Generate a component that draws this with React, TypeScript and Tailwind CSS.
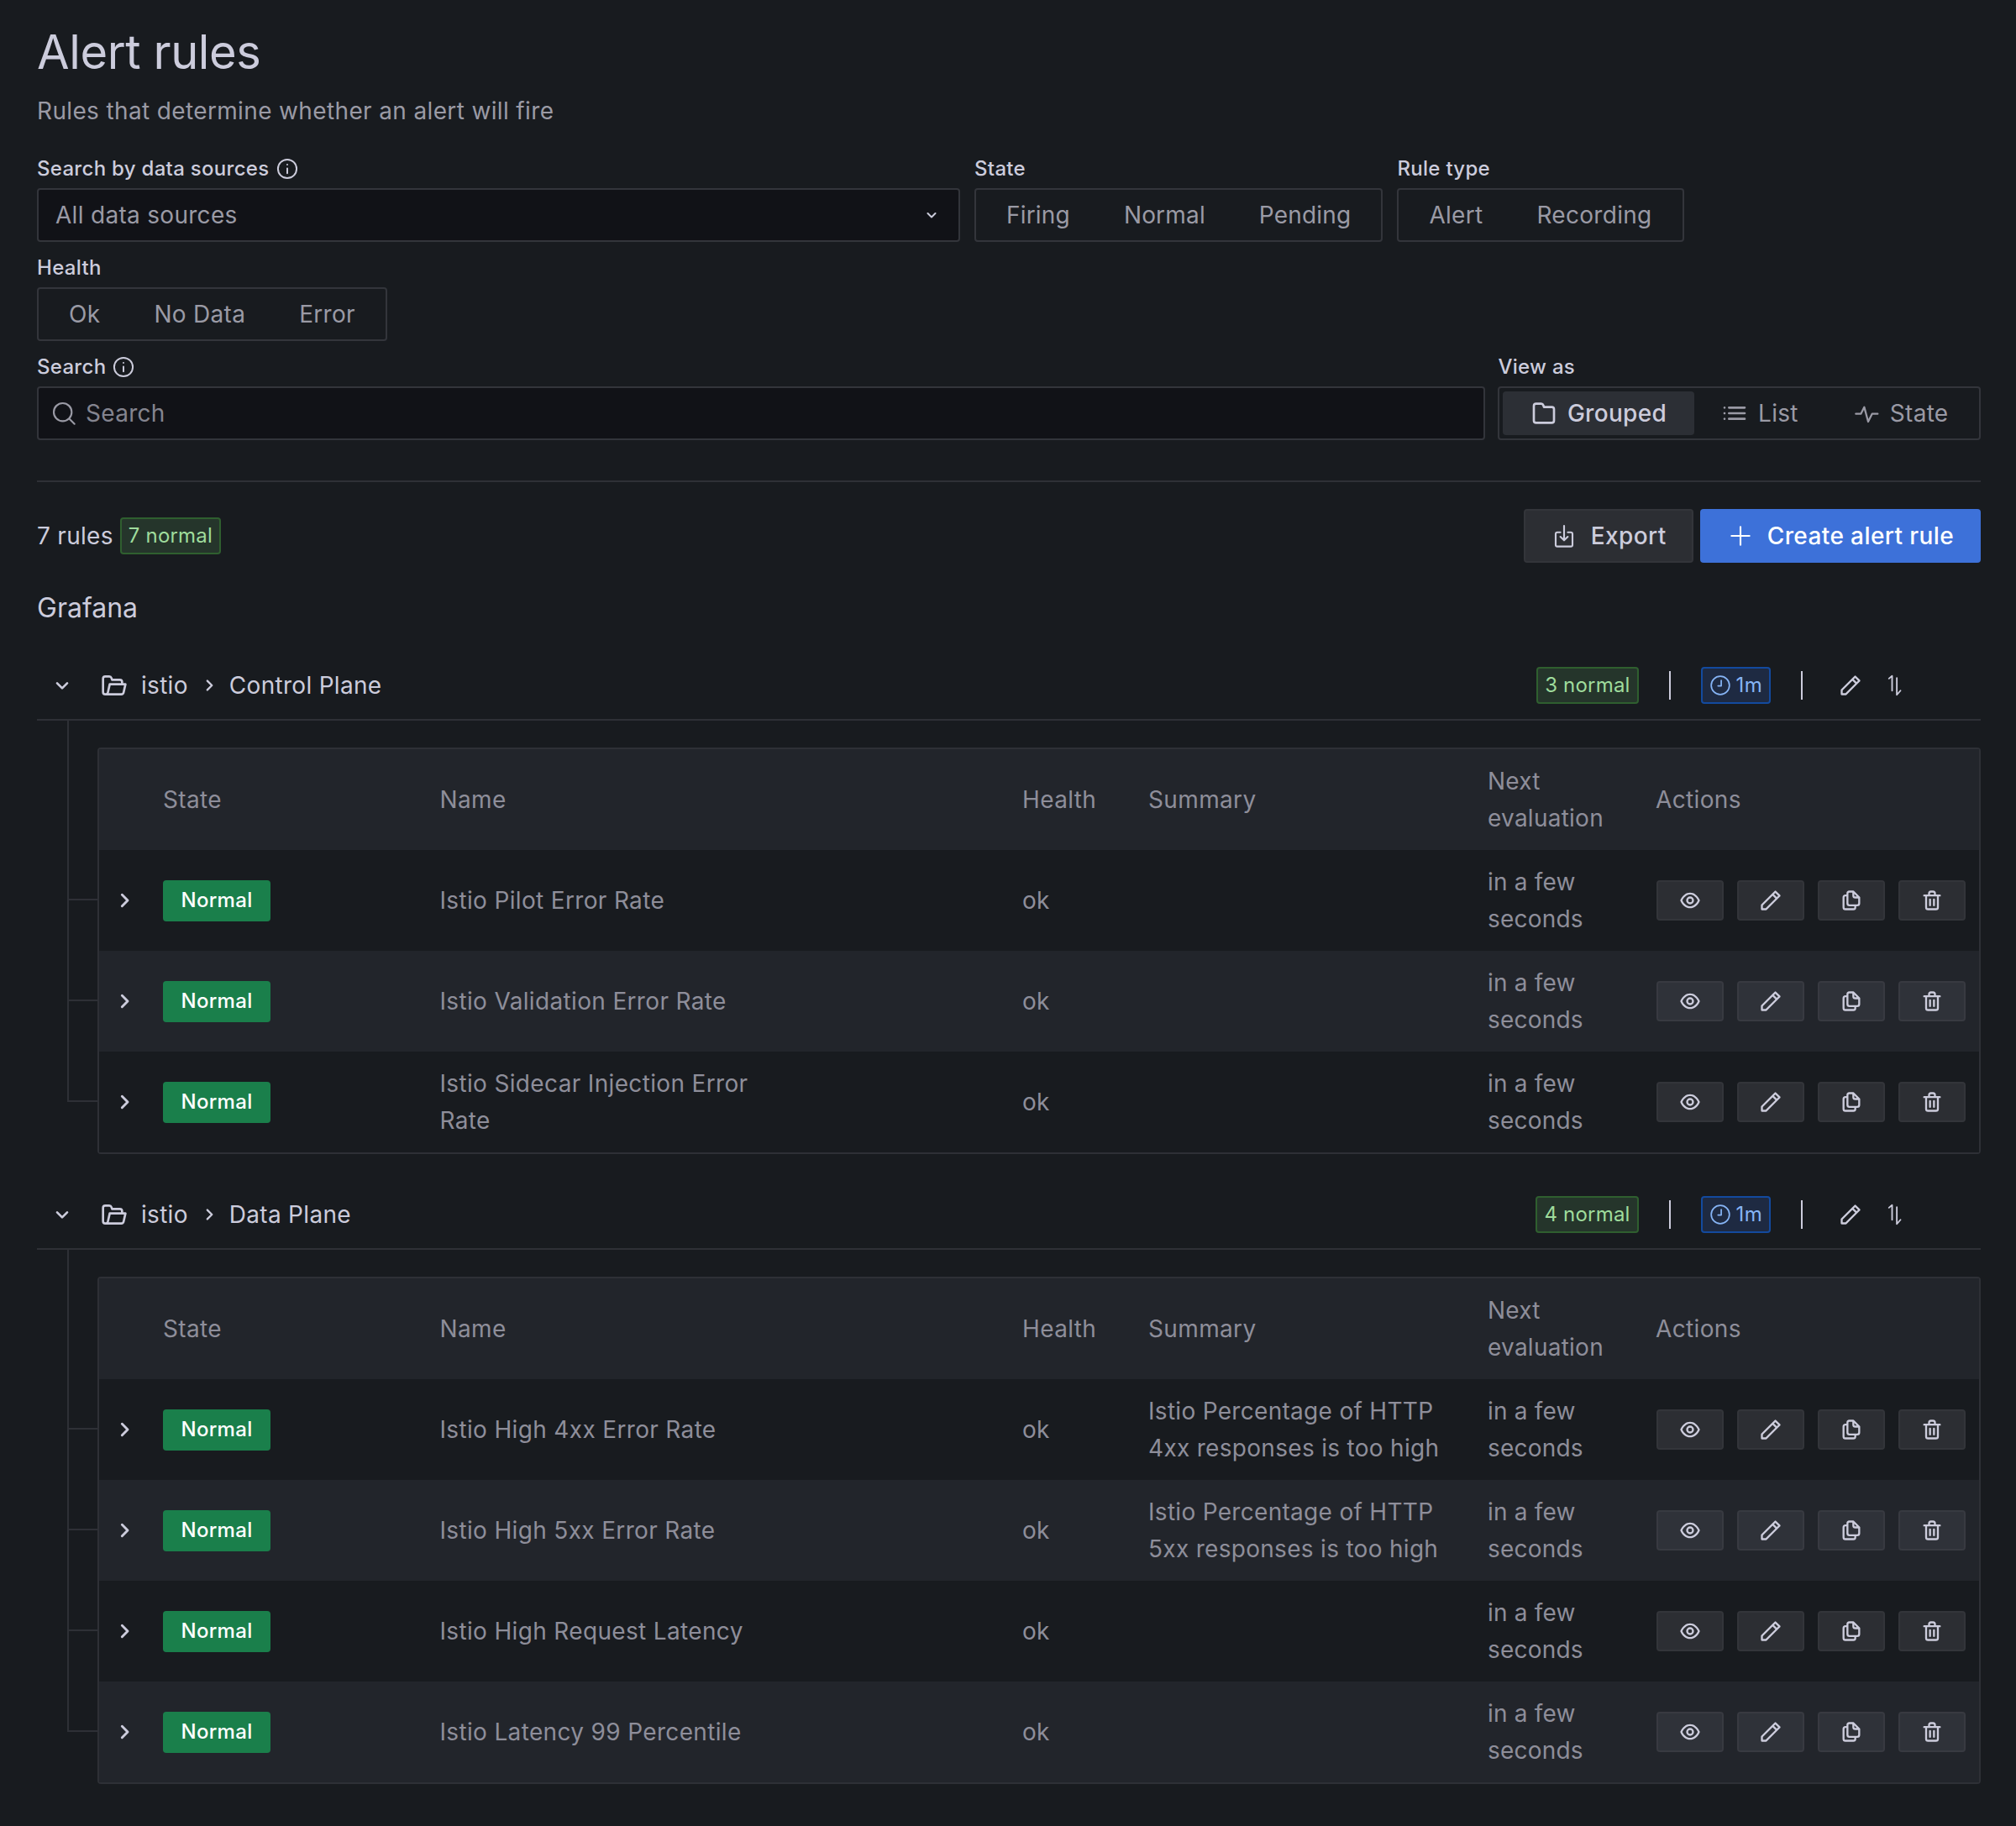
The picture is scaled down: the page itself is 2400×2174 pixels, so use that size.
import React from 'react';

const P = {
  eye: 'M21.92,11.6C19.9,6.91,16.1,4,12,4S4.1,6.91,2.08,11.6a1,1,0,0,0,0,.8C4.1,17.09,7.9,20,12,20s7.9-2.91,9.92-7.6A1,1,0,0,0,21.92,11.6ZM12,18c-3.17,0-6.17-2.29-7.9-6C5.83,8.29,8.83,6,12,6s6.17,2.29,7.9,6C18.17,15.71,15.17,18,12,18ZM12,8a4,4,0,1,0,4,4A4,4,0,0,0,12,8Zm0,6a2,2,0,1,1,2-2A2,2,0,0,1,12,14Z',
  pen: 'M22,7.24a1,1,0,0,0-.29-.71L17.47,2.29A1,1,0,0,0,16.76,2a1,1,0,0,0-.71.29L13.22,5.12h0L2.29,16.05a1,1,0,0,0-.29.71V21a1,1,0,0,0,1,1H7.24A1,1,0,0,0,8,21.71L18.87,10.78h0L21.71,8a1.19,1.19,0,0,0,.22-.33,1,1,0,0,0,0-.24.7.7,0,0,0,0-.14ZM6.83,20H4V17.17l9.93-9.93,2.83,2.83ZM18.17,8.66,15.34,5.83l1.42-1.41,2.82,2.82Z',
  copy: 'M21,8.94a1.31,1.31,0,0,0-.06-.27l0-.09a1.07,1.07,0,0,0-.19-.28h0l-6-6h0a1.07,1.07,0,0,0-.28-.19.32.32,0,0,0-.09,0A.88.88,0,0,0,14.05,2H10A3,3,0,0,0,7,5V6H6A3,3,0,0,0,3,9V19a3,3,0,0,0,3,3h8a3,3,0,0,0,3-3V18h1a3,3,0,0,0,3-3V9S21,9,21,8.94ZM15,5.41,17.59,8H16a1,1,0,0,1-1-1ZM15,19a1,1,0,0,1-1,1H6a1,1,0,0,1-1-1V9A1,1,0,0,1,6,8H7v7a3,3,0,0,0,3,3h5Zm4-4a1,1,0,0,1-1,1H10a1,1,0,0,1-1-1V5a1,1,0,0,1,1-1h3V7a3,3,0,0,0,3,3h3Z',
  trash: 'M10,18a1,1,0,0,0,1-1V11a1,1,0,0,0-2,0v6A1,1,0,0,0,10,18ZM20,6H16V5a3,3,0,0,0-3-3H11A3,3,0,0,0,8,5V6H4A1,1,0,0,0,4,8H5V19a3,3,0,0,0,3,3h8a3,3,0,0,0,3-3V8h1a1,1,0,0,0,0-2ZM10,5a1,1,0,0,1,1-1h2a1,1,0,0,1,1,1V6H10Zm7,14a1,1,0,0,1-1,1H8a1,1,0,0,1-1-1V8H17Zm-3-1a1,1,0,0,0,1-1V11a1,1,0,0,0-2,0v6A1,1,0,0,0,14,18Z',
  folderOpen: 'M22.78,10.37A1,1,0,0,0,22,10H20V9a3,3,0,0,0-3-3H10.72l-.32-1A3,3,0,0,0,7.56,3H4A3,3,0,0,0,1,6V18a3,3,0,0,0,3,3H18.4a3,3,0,0,0,2.92-2.35L23,11.22A1,1,0,0,0,22.78,10.37ZM5.37,18.22a1,1,0,0,1-1,.78H4a1,1,0,0,1-1-1V6A1,1,0,0,1,4,5H7.56a1,1,0,0,1,1,.68l.54,1.64A1,1,0,0,0,10,8h7a1,1,0,0,1,1,1v1H8a1,1,0,0,0-1,.78Zm14,0A1,1,0,0,1,18.4,19H7.17a1.42,1.42,0,0,0,.05-.22L8.8,12H20.75Z',
  folder: 'M19,5.5H12.72l-.32-1a3,3,0,0,0-2.84-2H5a3,3,0,0,0-3,3v13a3,3,0,0,0,3,3H19a3,3,0,0,0,3-3V8.5A3,3,0,0,0,19,5.5Zm1,13a1,1,0,0,1-1,1H5a1,1,0,0,1-1-1V5.5a1,1,0,0,1,1-1H9.56a1,1,0,0,1,.95.68l.54,1.64A1,1,0,0,0,12,7.5h7a1,1,0,0,1,1,1Z',
  list: 'M3.71,16.29a1,1,0,0,0-.33-.21,1,1,0,0,0-.76,0,1,1,0,0,0-.33.21,1,1,0,0,0-.21.33,1,1,0,0,0,.21,1.09,1.15,1.15,0,0,0,.33.21.94.94,0,0,0,.76,0,1.15,1.15,0,0,0,.33-.21,1,1,0,0,0,.21-1.09A1,1,0,0,0,3.71,16.29ZM7,8H21a1,1,0,0,0,0-2H7A1,1,0,0,0,7,8ZM3.71,11.29a1,1,0,0,0-1.09-.21,1.15,1.15,0,0,0-.33.21,1,1,0,0,0-.21.33.94.94,0,0,0,0,.76,1.15,1.15,0,0,0,.21.33,1.15,1.15,0,0,0,.33.21.94.94,0,0,0,.76,0,1.15,1.15,0,0,0,.33-.21,1.15,1.15,0,0,0,.21-.33.94.94,0,0,0,0-.76A1,1,0,0,0,3.71,11.29ZM21,11H7a1,1,0,0,0,0,2H21a1,1,0,0,0,0-2ZM3.71,6.29a1,1,0,0,0-.33-.21,1,1,0,0,0-1.09.21,1.15,1.15,0,0,0-.21.33.94.94,0,0,0,0,.76,1.15,1.15,0,0,0,.21.33,1.15,1.15,0,0,0,.33.21,1,1,0,0,0,1.09-.21,1.15,1.15,0,0,0,.21-.33.94.94,0,0,0,0-.76A1.15,1.15,0,0,0,3.71,6.29ZM21,16H7a1,1,0,0,0,0,2H21a1,1,0,0,0,0-2Z',
};

const Fill = ({ d, className }: { d: string; className: string }) => (
  <svg viewBox="0 0 24 24" fill="currentColor" className={className}>
    <path d={d} />
  </svg>
);

const Line = ({ children, className, width = 2 }: { children: React.ReactNode; className: string; width?: number }) => (
  <svg viewBox="0 0 24 24" fill="none" stroke="currentColor" strokeWidth={width} strokeLinecap="round" strokeLinejoin="round" className={className}>
    {children}
  </svg>
);

const AngleDown = ({ className }: { className: string }) => (
  <Line className={className}><path d="M7.5 10l4.5 4.5 4.5-4.5" /></Line>
);
const AngleRight = ({ className }: { className: string }) => (
  <Line className={className} width={2.2}><path d="M10 7l5 5-5 5" /></Line>
);
const Info = () => (
  <Line className="w-[28px] h-[28px] ml-[7px] text-[#ccccdc]" width={1.7}>
    <circle cx="12" cy="12" r="9.5" />
    <path d="M12 11.5v5M12 7.6v.2" />
  </Line>
);

const Label = ({ children }: { children: React.ReactNode }) => (
  <div className="flex items-center h-[36px] mb-[5px] text-[24px] font-medium text-[#ccccdc]">{children}</div>
);

const Segmented = ({ items, className = '' }: { items: string[]; className?: string }) => (
  <div className="flex h-[64px] p-[4px] border-2 border-[#33353b] rounded-[4px] w-fit">
    {items.map((item) => (
      <div key={item} className={`flex items-center px-[32px] text-[28px] text-[#9a9aa5] ${className}`}>{item}</div>
    ))}
  </div>
);

const CountBadge = ({ text }: { text: string }) => (
  <div className="flex items-center h-[44px] px-[8px] rounded-[4px] border-2 border-[#2f5f2f] bg-[#25352b] text-[24px] tracking-[0.2px] text-[#9fdc9c]">{text}</div>
);

const ViewOption = ({ active, icon, label }: { active?: boolean; icon: React.ReactNode; label: string }) => (
  <div className={`flex items-center gap-[12px] h-[52px] px-[32.5px] rounded-[4px] text-[28px] ${active ? 'bg-[#2c2f35] text-[#ccccdc] font-medium' : 'text-[#9a9aa5]'}`}>
    {icon}
    <span>{label}</span>
  </div>
);

const Filters = () => (
  <div className="mt-[29px]">
    <div className="flex gap-[17px]">
      <div className="w-[1099px]">
        <Label>Search by data sources<Info /></Label>
        <div className="flex items-center justify-between h-[64px] pl-[20px] pr-[20px] bg-[#111217] border-2 border-[#33353b] rounded-[4px] text-[28px] text-[#9a9aa5]">
          <span>All data sources</span>
          <AngleDown className="w-[24px] h-[24px] text-[#ccccdc]" />
        </div>
      </div>
      <div>
        <Label>State</Label>
        <Segmented items={['Firing', 'Normal', 'Pending']} className="tracking-[0.18px]" />
      </div>
      <div>
        <Label>Rule type</Label>
        <Segmented items={['Alert', 'Recording']} />
      </div>
    </div>
    <div className="mt-[13px]">
      <Label>Health</Label>
      <Segmented items={['Ok', 'No Data', 'Error']} />
    </div>
    <div className="flex mt-[13px] gap-[15px]">
      <div className="flex-1">
        <Label>Search<Info /></Label>
        <div className="flex items-center gap-[10px] h-[64px] pl-[14px] bg-[#111217] border-2 border-[#33353b] rounded-[4px] text-[28px] text-[#84848f]">
          <Line className="w-[32px] h-[32px] text-[#9a9aa5]" width={1.6}>
            <circle cx="11" cy="11" r="8" />
            <path d="M17 17l4.5 4.5" />
          </Line>
          <span>Search</span>
        </div>
      </div>
      <div>
        <Label>View as</Label>
        <div className="flex items-center h-[64px] p-[4px] border-2 border-[#33353b] rounded-[4px]">
          <ViewOption active label="Grouped" icon={<Fill d={P.folder} className="w-[32px] h-[32px]" />} />
          <ViewOption label="List" icon={<Fill d={P.list} className="w-[32px] h-[32px]" />} />
          <ViewOption
            label="State"
            icon={
              <Line className="w-[32px] h-[32px]" width={1.7}>
                <path d="M2.5 12.5H7l3-6 3.5 13 3.5-7h5" />
              </Line>
            }
          />
        </div>
      </div>
    </div>
  </div>
);

const ACTIONS = [P.eye, P.pen, P.copy, P.trash];

type Rule = { name: string; summary?: string };

const Cols = ({ cells, className }: { cells: React.ReactNode[]; className: string }) => {
  const widths = ['w-[76px]', 'w-[329.5px]', 'w-[693.5px]', 'w-[150px]', 'w-[404px]', 'w-[200px]', 'flex-1'];
  return (
    <div className={`flex items-center h-[120px] ${className}`}>
      {cells.map((cell, i) => (
        <div key={i} className={`${widths[i]} shrink-0`}>{cell}</div>
      ))}
    </div>
  );
};

const RuleRow = ({ rule, striped }: { rule: Rule; striped: boolean }) => (
  <div className="relative">
    <div className="absolute left-[-36px] top-[58px] w-[36px] h-[2px] bg-[#2e3036]" />
    <Cols
      className={striped ? 'bg-[#22252b]' : 'bg-[#181b1f]'}
      cells={[
        <AngleRight className="w-[32px] h-[32px] ml-[14px] text-[#ccccdc]" />,
        <div className="flex items-center justify-center w-[128px] h-[49px] rounded-[4px] bg-[#1a7f4b] text-[24px] font-medium text-white">Normal</div>,
        <div className="w-[420px] text-[28px] leading-[44px] tracking-[0.34px] text-[#8e8e9a]">{rule.name}</div>,
        <div className="text-[28px] text-[#8e8e9a]">ok</div>,
        <div className="w-[380px] text-[28px] leading-[44px] text-[#8e8e9a]">{rule.summary}</div>,
        <div className="w-[180px] text-[28px] leading-[44px] tracking-[0.2px] text-[#8e8e9a]">in a few seconds</div>,
        <div className="flex gap-[16px] ml-[1px]">
          {ACTIONS.map((d) => (
            <div key={d} className={`flex items-center justify-center w-[80px] h-[48px] rounded-[4px] border-2 ${striped ? 'bg-[#2f3239] border-[#383a41]' : 'bg-[#2c2e33] border-[#33353a]'}`}>
              <Fill d={d} className="w-[28px] h-[28px] text-[#ccccdc]" />
            </div>
          ))}
        </div>,
      ]}
    />
  </div>
);

const Group = ({ title, count, rules }: { title: string; count: string; rules: Rule[] }) => (
  <section className="mt-[32px]">
    <div className="flex items-center h-[82px] border-b-2 border-[#2e3036] text-[28px] text-[#ccccdc]">
      <AngleDown className="w-[32px] h-[32px] ml-[14px]" />
      <Fill d={P.folderOpen} className="w-[32px] h-[32px] ml-[30px]" />
      <span className="ml-[16px]">istio</span>
      <AngleRight className="w-[26px] h-[26px] ml-[12px] mr-[11px]" />
      <span>{title}</span>
      <div className="flex items-center ml-auto mr-[88px]">
        <CountBadge text={count} />
        <div className="w-[2px] h-[34px] ml-[36px] bg-[#ccccdc]" />
        <div className="flex items-center gap-[6px] h-[44px] ml-[36px] px-[8px] rounded-[4px] border-2 border-[#134a9e] bg-[#1e2a42] text-[24px] text-[#86b4f5]">
          <Line className="w-[26px] h-[26px]" width={1.6}>
            <circle cx="12" cy="12" r="10" />
            <path d="M13 6.5V12.5H9.5" />
          </Line>
          <span>1m</span>
        </div>
        <div className="w-[2px] h-[34px] ml-[36px] bg-[#ccccdc]" />
        <Fill d={P.pen} className="w-[28px] h-[28px] ml-[43px]" />
        <Line className="w-[30px] h-[30px] ml-[23px]" width={1.5}>
          <path d="M7 5.5L10 3V17M14.5 5V21L18 17" />
        </Line>
      </div>
    </div>
    <div className="relative mt-[32px] ml-[72px]">
      <div className="absolute left-[-36px] top-[-32px] bottom-[62px] w-[2px] bg-[#2e3036]" />
      <div className="border-2 border-[#2e3036] rounded-[4px]">
        <Cols
          className="bg-[#22252b] text-[28px] leading-[44px] tracking-[0.36px] text-[#8e8e9a]"
          cells={[null, 'State', 'Name', 'Health', 'Summary', <div className="w-[150px] tracking-[0.25px]">Next evaluation</div>, 'Actions']}
        />
        {rules.map((rule, i) => (
          <RuleRow key={rule.name} rule={rule} striped={i % 2 === 1} />
        ))}
      </div>
    </div>
  </section>
);

const CONTROL: Rule[] = [
  { name: 'Istio Pilot Error Rate' },
  { name: 'Istio Validation Error Rate' },
  { name: 'Istio Sidecar Injection Error Rate' },
];

const DATA: Rule[] = [
  { name: 'Istio High 4xx Error Rate', summary: 'Istio Percentage of HTTP 4xx responses is too high' },
  { name: 'Istio High 5xx Error Rate', summary: 'Istio Percentage of HTTP 5xx responses is too high' },
  { name: 'Istio High Request Latency' },
  { name: 'Istio Latency 99 Percentile' },
];

export default function App() {
  return (
    <div className="min-h-screen bg-[#181b1f] px-[42px] pt-[27px] pb-[49px] font-[Inter,sans-serif] tracking-[0.3px]">
      <div className="ml-[2px]">
        <h1 className="h-[70px] text-[56px] leading-[70px] text-[#ccccdc] tracking-[-0.4px]">Alert rules</h1>
        <p className="mt-[13px] text-[28px] leading-[44px] tracking-[0.36px] text-[#9a9aa5]">Rules that determine whether an alert will fire</p>
        <Filters />
        <div className="h-[2px] mt-[48px] bg-[#2e3036]" />
        <div className="flex items-center mt-[32px]">
          <span className="text-[28px] text-[#ccccdc]">7 rules</span>
          <div className="ml-[8px]"><CountBadge text="7 normal" /></div>
          <div className="flex items-center gap-[16px] h-[64px] ml-auto px-[30px] rounded-[4px] border-2 border-[#33353a] bg-[#2c2e33] text-[28px] font-medium tracking-[0.4px] text-[#ccccdc]">
            <Line className="w-[32px] h-[32px]" width={1.6}>
              <path d="M8.7 8.8H6A1.5 1.5 0 0 0 4.5 10.3v9.7A1.5 1.5 0 0 0 6 21.5h12a1.5 1.5 0 0 0 1.5-1.5v-9.7A1.5 1.5 0 0 0 18 8.8h-2.7M12 3v13M8.7 12.8L12 16l3.3-3.2" />
            </Line>
            <span>Export</span>
          </div>
          <div className="flex items-center gap-[16px] h-[64px] ml-[8px] px-[32px] rounded-[4px] bg-[#3d71d9] text-[28px] font-medium tracking-[0.4px] text-white">
            <Line className="w-[32px] h-[32px]" width={1.6}>
              <path d="M12 4v16M4 12h16" />
            </Line>
            <span>Create alert rule</span>
          </div>
        </div>
        <div className="mt-[34px] text-[32px] leading-[40px] tracking-normal text-[#ccccdc]">Grafana</div>
        <Group title="Control Plane" count="3 normal" rules={CONTROL} />
        <Group title="Data Plane" count="4 normal" rules={DATA} />
      </div>
    </div>
  );
}
